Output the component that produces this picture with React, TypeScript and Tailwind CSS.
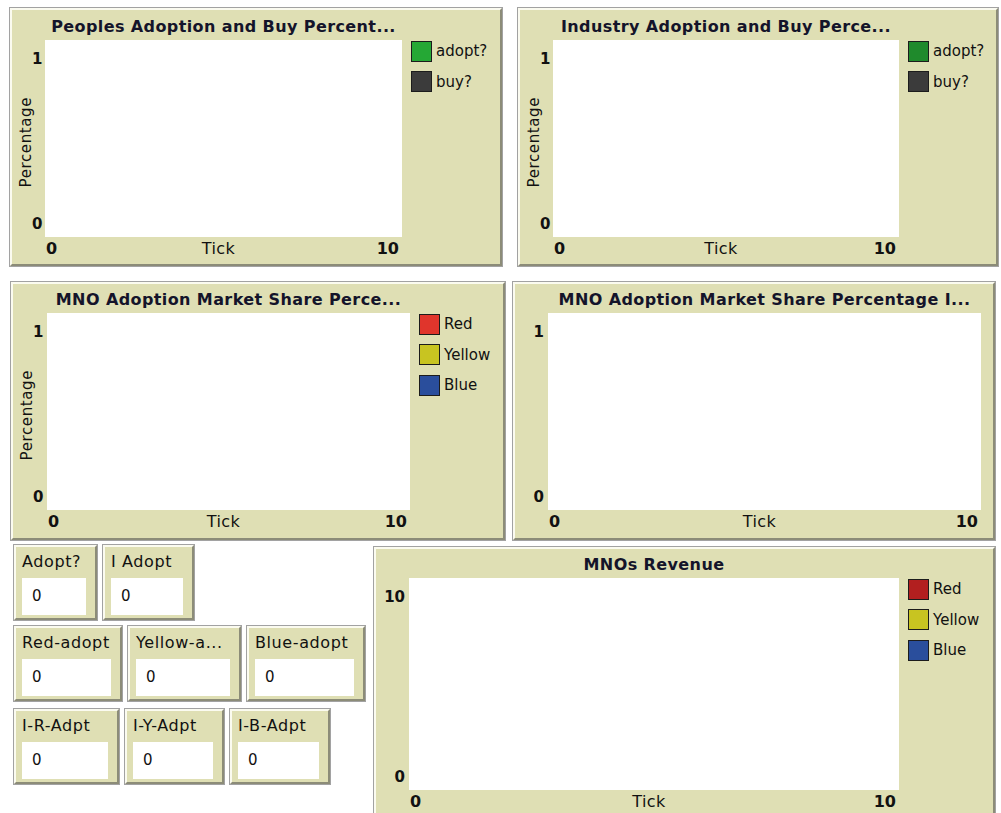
import React from "react";

type LegendItem = { name: string; color: string };

function Frame({
  className,
  children,
}: {
  className: string;
  children: React.ReactNode;
}) {
  return (
    <div className={`border border-[#a2a2a2] ${className}`}>
      <div className="h-full w-full border-2 border-t-[#fbfbf0] border-l-[#fbfbf0] border-r-[#8c8c78] border-b-[#8c8c78] bg-[#dfdfb4]">
        {children}
      </div>
    </div>
  );
}

function Plot({
  className,
  grid,
  title,
  yLabel,
  yMax,
  legend,
}: {
  className: string;
  grid: string;
  title: string;
  yLabel?: string;
  yMax: string;
  legend: LegendItem[];
}) {
  return (
    <Frame className={className}>
      <div className={`grid h-full ${grid}`}>
        <div />
        <div className="flex items-center justify-center pt-[3px] text-[16px] font-bold tracking-[0.4px] whitespace-nowrap text-[#14142a]">
          {title}
        </div>
        <div />

        <div className="flex">
          {yLabel && (
            <div className="-mr-[3px] ml-[6px] flex w-[17px] items-center justify-center pt-[8px]">
              <span className="rotate-180 text-[15px] tracking-[0.6px] [writing-mode:vertical-rl]">
                {yLabel}
              </span>
            </div>
          )}
          <div className="ml-auto flex flex-col justify-between pt-[8px] pr-[4px] pb-[2px] text-right text-[15px] font-bold">
            <span>{yMax}</span>
            <span>0</span>
          </div>
        </div>
        <div className="bg-white" />
        <div className="flex flex-col gap-[8px] pl-[9px]">
          {legend.map((item) => (
            <div key={item.name} className="flex items-center gap-[4px]">
              <span
                className="h-[21px] w-[21px] border-[1.5px] border-[#1c1c1c]"
                style={{ backgroundColor: item.color }}
              />
              <span className="text-[15px]">{item.name}</span>
            </div>
          ))}
        </div>

        <div />
        <div className="grid grid-cols-3 items-center pb-[4px] text-[16px]">
          <span className="pl-[1px] font-bold">0</span>
          <span className="pr-[10px] text-center tracking-[0.4px]">Tick</span>
          <span className="pr-[3px] text-right font-bold">10</span>
        </div>
        <div />
      </div>
    </Frame>
  );
}

function Monitor({ label, className }: { label: string; className: string }) {
  return (
    <Frame className={`h-[77px] ${className}`}>
      <div className="flex h-full flex-col pt-[5px] pr-[9px] pl-[6px]">
        <span className="text-[16px] leading-[20px] tracking-[0.6px] whitespace-nowrap">
          {label}
        </span>
        <div className="mt-[6px] flex h-[37px] items-center bg-white pl-[10px] text-[15px]">
          0
        </div>
      </div>
    </Frame>
  );
}

export default function App() {
  return (
    <div className="h-[813px] overflow-hidden bg-white font-['DejaVu_Sans',sans-serif] text-[#111]">
      <div className="flex flex-col pt-[7px]">
        <div className="flex gap-[14px] pl-[9px]">
          <Plot
            className="h-[260px] w-[494px]"
            grid="grid-cols-[33px_357px_1fr] grid-rows-[30px_197px_1fr]"
            title="Peoples Adoption and Buy Percent..."
            yLabel="Percentage"
            yMax="1"
            legend={[
              { name: "adopt?", color: "#25a835" },
              { name: "buy?", color: "#3b3b3b" },
            ]}
          />
          <Plot
            className="h-[260px] w-[482px]"
            grid="grid-cols-[33px_346px_1fr] grid-rows-[30px_197px_1fr]"
            title="Industry Adoption and Buy Perce..."
            yLabel="Percentage"
            yMax="1"
            legend={[
              { name: "adopt?", color: "#1f8a2c" },
              { name: "buy?", color: "#3b3b3b" },
            ]}
          />
        </div>

        <div className="mt-[14px] flex gap-[6px] pl-[10px]">
          <Plot
            className="h-[260px] w-[496px]"
            grid="grid-cols-[34px_363px_1fr] grid-rows-[29px_197px_1fr]"
            title="MNO Adoption Market Share Perce..."
            yLabel="Percentage"
            yMax="1"
            legend={[
              { name: "Red", color: "#e0352c" },
              { name: "Yellow", color: "#c8c421" },
              { name: "Blue", color: "#2a4e9c" },
            ]}
          />
          <Plot
            className="h-[260px] w-[484px]"
            grid="grid-cols-[33px_433px_1fr] grid-rows-[29px_197px_1fr]"
            title="MNO Adoption Market Share Percentage I..."
            yMax="1"
            legend={[]}
          />
        </div>

        <div className="mt-[3px] flex">
          <div className="flex w-[373px] flex-col pl-[13px]">
            <div className="flex gap-[4px]">
              <Monitor label="Adopt?" className="w-[85px]" />
              <Monitor label="I Adopt" className="w-[93px]" />
            </div>
            <div className="mt-[4px] flex gap-[4px]">
              <Monitor label="Red-adopt" className="w-[110px]" />
              <Monitor label="Yellow-a..." className="w-[115px]" />
              <Monitor label="Blue-adopt" className="w-[120px]" />
            </div>
            <div className="mt-[6px] flex gap-[4px]">
              <Monitor label="I-R-Adpt" className="w-[107px]" />
              <Monitor label="I-Y-Adpt" className="w-[101px]" />
              <Monitor label="I-B-Adpt" className="w-[102px]" />
            </div>
          </div>
          <div className="mt-[2px]">
            <Plot
              className="h-[270px] w-[623px]"
              grid="grid-cols-[33px_490px_1fr] grid-rows-[29px_212px_1fr]"
              title="MNOs Revenue"
              yMax="10"
              legend={[
                { name: "Red", color: "#b21f1f" },
                { name: "Yellow", color: "#c8c421" },
                { name: "Blue", color: "#2a4e9c" },
              ]}
            />
          </div>
        </div>
      </div>
    </div>
  );
}
